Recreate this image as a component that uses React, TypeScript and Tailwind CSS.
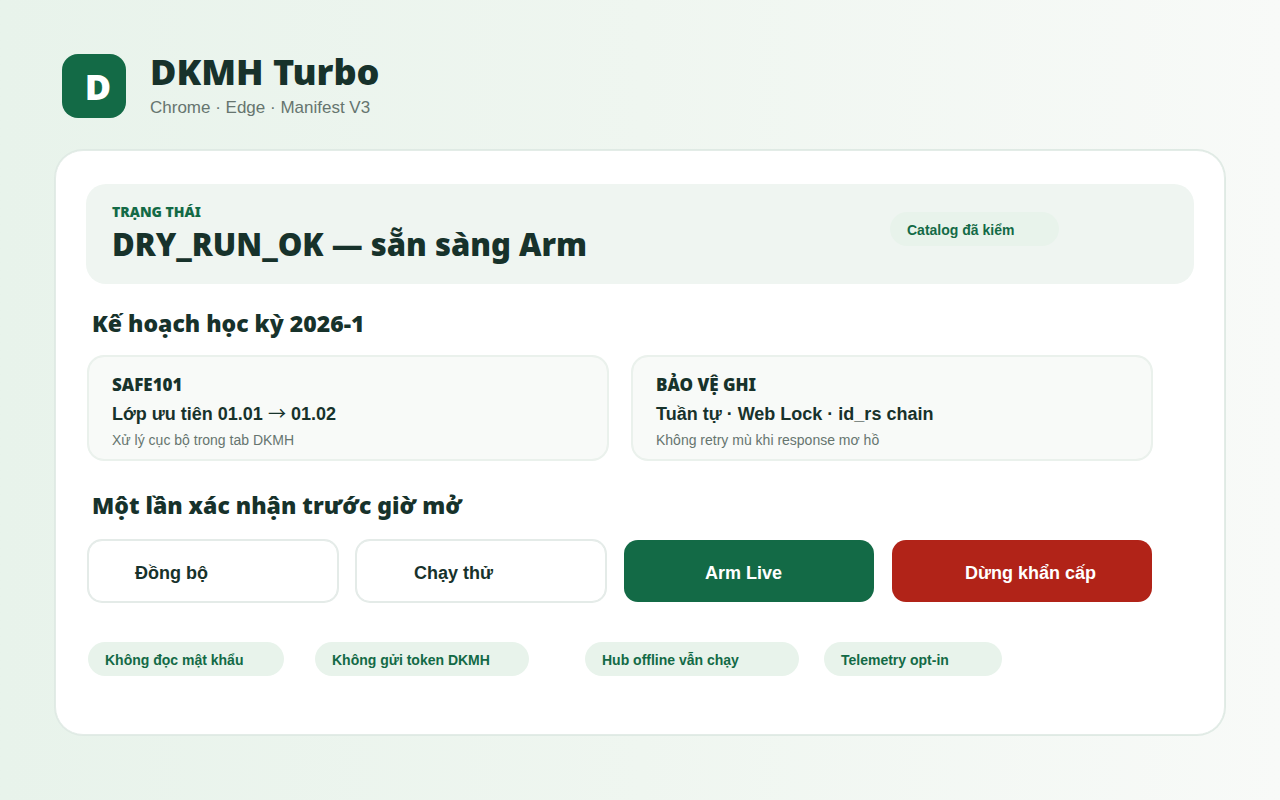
import clsx from "clsx";
import type { ReactNode } from "react";

const plans = [
  {
    code: "SAFE101",
    title: (
      <>
        Lớp ưu tiên 01.01{" "}
        <span className="font-['Noto_Sans_CJK_JP',sans-serif] leading-none font-normal">
          →
        </span>{" "}
        01.02
      </>
    ),
    note: "Xử lý cục bộ trong tab DKMH",
  },
  {
    code: "BẢO VỆ GHI",
    title: "Tuần tự · Web Lock · id_rs chain",
    note: "Không retry mù khi response mơ hồ",
  },
];

const outlined =
  "border border-[#e4ebe8] bg-white text-[#17322b] ring-1 ring-[#e4ebe8]";

const actions = [
  { label: "Đồng bộ", className: clsx(outlined, "pl-[46px]") },
  { label: "Chạy thử", className: clsx(outlined, "pl-[57px]") },
  { label: "Arm Live", className: "bg-[#136a46] pl-[81px] text-white" },
  { label: "Dừng khẩn cấp", className: "bg-[#b12318] pl-[73px] text-white" },
];

const notes = [
  { label: "Không đọc mật khẩu", className: "w-[196px]" },
  { label: "Không gửi token DKMH", className: "w-[214px]" },
  { label: "Hub offline vẫn chạy", className: "w-[214px]" },
  { label: "Telemetry opt-in", className: "w-[178px]" },
];

const Pill = ({ label, className }: { label: string; className: string }) => (
  <span
    className={clsx(
      "block rounded-full bg-[#e8f3eb] pt-2 pb-1.5 pl-[17px] text-sm font-bold whitespace-nowrap text-[#136a46]",
      className
    )}
  >
    {label}
  </span>
);

const SectionTitle = ({ children }: { children: ReactNode }) => (
  <h2 className="pl-1 font-['Noto_Sans',sans-serif] text-[23px] leading-[30px] font-black">
    {children}
  </h2>
);

const App = () => {
  return (
    <div className="min-h-screen bg-linear-to-r from-[#e8f3eb] via-[#eff6f0] to-[#f8faf8] px-[55px] pt-[54px] pb-16 font-['Liberation_Sans',Arial,sans-serif] text-[#17322b]">
      <header className="flex items-start gap-6 pl-[7px]">
        <div className="flex h-16 w-16 items-center justify-center rounded-2xl bg-[#136a46] pt-0.5 pl-2 font-['Noto_Sans',sans-serif] text-4xl font-black text-white">
          D
        </div>
        <div>
          <h1 className="font-['Noto_Sans',sans-serif] text-4xl leading-9 font-black">
            DKMH Turbo
          </h1>
          <p className="pt-1.5 text-[17px] leading-6 text-[#66756f]">
            Chrome · Edge · Manifest V3
          </p>
        </div>
      </header>

      <main className="mt-[30px] rounded-[28px] border border-[#e3ece7] bg-white px-[30px] pt-[33px] pb-[58px] ring-1 ring-[#dfeae4]">
        {/* Status */}
        <section className="flex items-start justify-between rounded-[20px] bg-[#eff5f1] pt-4 pr-[135px] pb-5 pl-[26px]">
          <div>
            <p className="font-['Noto_Sans',sans-serif] text-sm leading-6 font-black text-[#136a46]">
              TRẠNG THÁI
            </p>
            <p className="font-['Noto_Sans',sans-serif] text-[31px] leading-10 font-black">
              DRY_RUN_OK — sẵn sàng Arm
            </p>
          </div>
          <div className="pt-3">
            <Pill label="Catalog đã kiểm" className="w-[169px]" />
          </div>
        </section>

        <div className="pr-[42px] pl-[2px]">
          {/* Plan */}
          <section className="pt-6">
            <SectionTitle>Kế hoạch học kỳ 2026-1</SectionTitle>
            <div className="mt-[18px] grid grid-cols-2 gap-6">
              {plans.map((plan) => (
                <article
                  key={plan.code}
                  className="rounded-2xl border border-[#eaf1ec] bg-[#f8faf8] px-[23px] pt-4 pb-[7px] ring-1 ring-[#eaf1ec]"
                >
                  <h3 className="font-['Noto_Sans',sans-serif] text-[17px] leading-6 font-black">
                    {plan.code}
                  </h3>
                  <p className="pt-[3px] text-lg leading-7 font-bold">
                    {plan.title}
                  </p>
                  <p className="text-sm leading-6 text-[#66756f]">
                    {plan.note}
                  </p>
                </article>
              ))}
            </div>
          </section>

          {/* Actions */}
          <section className="pt-[30px]">
            <SectionTitle>Một lần xác nhận trước giờ mở</SectionTitle>
            <div className="mt-5 grid grid-cols-[250fr_250fr_250fr_260fr] gap-[18px]">
              {actions.map((action) => (
                <button
                  key={action.label}
                  type="button"
                  className={clsx(
                    "h-[62px] rounded-[14px] pt-1 text-left text-lg font-bold",
                    action.className
                  )}
                >
                  {action.label}
                </button>
              ))}
            </div>
          </section>

          <ul className="mt-10 grid grid-cols-[227fr_270fr_239fr_328fr]">
            {notes.map((note) => (
              <li key={note.label}>
                <Pill label={note.label} className={note.className} />
              </li>
            ))}
          </ul>
        </div>
      </main>
    </div>
  );
};

export default App;
